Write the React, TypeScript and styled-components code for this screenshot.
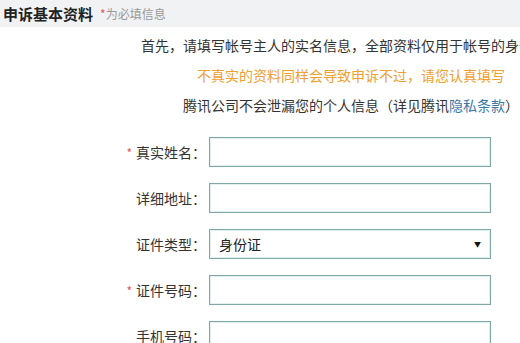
import React from "react";
import styled, { createGlobalStyle } from "styled-components";

const Global = createGlobalStyle`
  html, body { margin: 0; padding: 0; background: #ffffff; overflow: hidden; }
  body { font-family: "Noto Sans CJK SC", "Noto Sans", sans-serif; color: #333; }
`;

const Page = styled.div`
  width: 520px;
  height: 343px;
  overflow: hidden;
`;

const Header = styled.div`
  height: 27px;
  background: #f1f2f4;
  display: flex;
  align-items: center;
  gap: 7px;
  padding-left: 3px;
`;

const Title = styled.span`
  font-size: 15px;
  font-weight: bold;
  color: #222;
`;

const Hint = styled.span`
  font-size: 12px;
  color: #999;
`;

const Star = styled.span`
  color: #e0555a;
  font-size: 12px;
`;

const Intro = styled.div`
  width: 702px;
  padding-top: 3px;
  text-align: center;
`;

const Line = styled.div<{ $tone?: "warn" }>`
  font-size: 14px;
  line-height: 30px;
  white-space: nowrap;
  color: ${(p) => (p.$tone === "warn" ? "#f0a030" : "#333")};
`;

const Link = styled.span`
  color: #3a78a8;
`;

const Form = styled.div`
  margin-top: 17px;
  display: grid;
  grid-template-columns: 206px 282px;
  column-gap: 3px;
  row-gap: 16px;
  align-items: center;
`;

const Label = styled.div`
  font-size: 14px;
  color: #333;
  text-align: right;
  white-space: nowrap;
`;

const ReqMark = styled.span`
  color: #e0555a;
  font-size: 12px;
  margin-right: 4px;
`;

const Input = styled.div`
  height: 30px;
  box-sizing: border-box;
  border: 1px solid #7fa8a8;
  box-shadow: inset 0 0 0 1px #e6eff0;
  background: #fff;
`;

const Select = styled(Input)`
  display: flex;
  align-items: center;
  justify-content: space-between;
  padding: 0 9px 0 9px;
  font-size: 14px;
  color: #222;
`;

const Arrow = styled.span`
  font-size: 7px;
  color: #111;
`;

const rows: { label: string; req?: boolean; select?: string }[] = [
  { label: "真实姓名：", req: true },
  { label: "详细地址：" },
  { label: "证件类型：", select: "身份证" },
  { label: "证件号码：", req: true },
  { label: "手机号码：" },
];

export default function App() {
  return (
    <Page>
      <Global />
      <Header>
        <Title>申诉基本资料</Title>
        <Hint>
          <Star>*</Star>为必填信息
        </Hint>
      </Header>
      <Intro>
        <Line>首先，请填写帐号主人的实名信息，全部资料仅用于帐号的身份验证</Line>
        <Line $tone="warn">不真实的资料同样会导致申诉不过，请您认真填写</Line>
        <Line>
          腾讯公司不会泄漏您的个人信息（详见腾讯<Link>隐私条款</Link>）
        </Line>
      </Intro>
      <Form>
        {rows.map((r) => (
          <React.Fragment key={r.label}>
            <Label>
              {r.req && <ReqMark>*</ReqMark>}
              {r.label}
            </Label>
            {r.select ? (
              <Select>
                <span>{r.select}</span>
                <Arrow>▼</Arrow>
              </Select>
            ) : (
              <Input />
            )}
          </React.Fragment>
        ))}
      </Form>
    </Page>
  );
}
